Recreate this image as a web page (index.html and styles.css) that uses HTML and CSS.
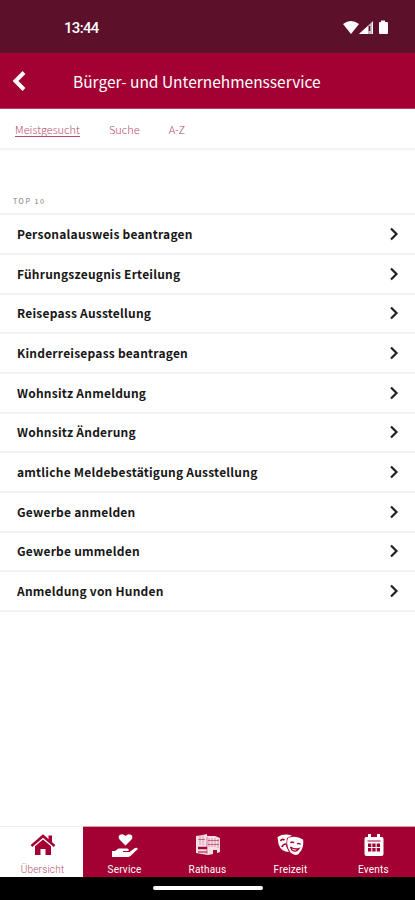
FILE: index.html
```html
<!DOCTYPE html>
<html lang="de">
<head>
<meta charset="utf-8">
<title>Bürger- und Unternehmensservice</title>
<link rel="stylesheet" href="styles.css">
</head>
<body>
<div class="status">
  <span class="clock">13:44</span>
  <svg class="signals" width="46" height="16" viewBox="0 0 46 16" fill="#fff">
    <path d="M0 4Q8 -2 16 4L8 14Z"/>
    <path d="M30 1V14H16Z" fill="#c9b5bf"/><path d="M25 6V14H16Z"/><path d="M26.500 6V11" stroke="#5c102a" stroke-width="1.500"/><path d="M29.500 2V14" stroke="#fff"/>
    <path d="M38 0.500h4v1.500h2q1 0 1 1v10q0 1-1 1h-7q-1 0-1-1V3q0-1 1-1h1z"/>
  </svg>
</div>
<header class="header">
  <svg class="back" width="14" height="20" viewBox="0 0 14 20"><path d="M12 1.500L3.500 10L12 18.500" fill="none" stroke="#fff" stroke-width="4"/></svg>
  <h1>Bürger- und Unternehmensservice</h1>
</header>
<nav class="tabs">
  <a class="tab active">Meistgesucht</a><a class="tab">Suche</a><a class="tab">A-Z</a>
</nav>
<main>
  <h2>TOP 10</h2>
  <ul class="list">
    <li><span>Personalausweis beantragen</span><svg class="chev" viewBox="0 0 10 14"><path d="M2 1.500L7.500 7L2 12.500"/></svg></li>
    <li><span>Führungszeugnis Erteilung</span><svg class="chev" viewBox="0 0 10 14"><path d="M2 1.500L7.500 7L2 12.500"/></svg></li>
    <li><span>Reisepass Ausstellung</span><svg class="chev" viewBox="0 0 10 14"><path d="M2 1.500L7.500 7L2 12.500"/></svg></li>
    <li><span>Kinderreisepass beantragen</span><svg class="chev" viewBox="0 0 10 14"><path d="M2 1.500L7.500 7L2 12.500"/></svg></li>
    <li><span>Wohnsitz Anmeldung</span><svg class="chev" viewBox="0 0 10 14"><path d="M2 1.500L7.500 7L2 12.500"/></svg></li>
    <li><span>Wohnsitz Änderung</span><svg class="chev" viewBox="0 0 10 14"><path d="M2 1.500L7.500 7L2 12.500"/></svg></li>
    <li><span>amtliche Meldebestätigung Ausstellung</span><svg class="chev" viewBox="0 0 10 14"><path d="M2 1.500L7.500 7L2 12.500"/></svg></li>
    <li><span>Gewerbe anmelden</span><svg class="chev" viewBox="0 0 10 14"><path d="M2 1.500L7.500 7L2 12.500"/></svg></li>
    <li><span>Gewerbe ummelden</span><svg class="chev" viewBox="0 0 10 14"><path d="M2 1.500L7.500 7L2 12.500"/></svg></li>
    <li><span>Anmeldung von Hunden</span><svg class="chev" viewBox="0 0 10 14"><path d="M2 1.500L7.500 7L2 12.500"/></svg></li>
  </ul>
</main>
<nav class="bottom">
  <a class="item active">
    <svg width="26" height="22" viewBox="0 0 26 22"><path d="M1.500 12L13 2L24.500 12" fill="none" stroke="#a30034" stroke-width="2.500"/><path d="M18.500 1.500h3.500v7l-3.500-3zM5 12.300L13 5.500L21 12.300V21H15.500V15h-5v6H5z" fill="#a30034"/></svg>
    <span>Übersicht</span>
  </a>
  <a class="item">
    <svg width="26" height="24" viewBox="0 0 26 24" fill="#fff"><path d="M13.500 11.500L7.500 5.500Q5.500 2.500 8 0.800Q11-.8 13.500 2Q16-.8 19 .8Q21.500 2.500 19.500 5.500Z"/><path d="M0 17H3L6.500 14.500H15.500Q17.500 15.200 16.500 17H11V18H17.500L23 14Q25.500 13 25.800 15L19 21.500Q17.500 23 15 23H0Z"/></svg>
    <span>Service</span>
  </a>
  <a class="item">
    <svg width="26" height="22" viewBox="0 0 26 22"><path d="M1 2L8 1L12 0V2L20 2L25 4V18L22 19V16H18V20L13 21L1 19Z" fill="#f7dfe7"/><g stroke="#a30034" fill="none"><path d="M12 3V20M3 5.500h7M13 6.500h11M13 10.500h11" stroke-width=".5"/><path d="M3 14h9" stroke-width="2.500"/><path d="M3 18h9" stroke-width="1"/><path d="M5 2v9M8 2v9M14 4v9M17 4v9M20 4v9M23 5v9" stroke-width=".35"/></g></svg>
    <span>Rathaus</span>
  </a>
  <a class="item">
    <svg width="27" height="22" viewBox="0 0 27 22"><path d="M.5 3Q7-1 15 1.500L10 4L9 12L12 18Q4 18 1.500 10Z" fill="#fff"/><path d="M3.500 7Q5 4.500 7.500 6M5 13Q6 10 9 10" stroke="#a30034" stroke-width="1.700" fill="none"/><path d="M11 4Q19 1 26 5.500Q27.500 14 21.500 20Q18 22.500 13.500 18.500Q8.500 12 11 4Z" fill="#fff"/><path d="M13.500 9Q15 7 17 9M20 10Q22 8.500 23.500 10.500M13.500 13Q17.500 16 22 14.500Q19 19 15 16Z" stroke="#a30034" stroke-width="1.300" fill="none"/></svg>
    <span>Freizeit</span>
  </a>
  <a class="item">
    <svg width="20" height="22" viewBox="0 0 20 22"><path d="M2 3H4V0H7V3H13V0H16V3H18Q19.500 3 19.500 5V20Q19.500 22 17.500 22H2.500Q.5 22 .5 20V5Q.5 3 2 3Z" fill="#fff"/><path d="M3.500 7H16.500" stroke="#a30034"/><path d="M4 9.500h3.300v3.500H4zM8.300 9.500h3.300v3.500h-3.300zM12.700 9.500h3.300v3.500h-3.300zM4 14h3.300v3.500H4zM8.300 14h3.300v3.500h-3.300zM12.700 14h3.300v3.500h-3.300z" fill="#a30034"/></svg>
    <span>Events</span>
  </a>
</nav>
<div class="gesture"><i></i></div>
</body>
</html>
```
FILE: styles.css
```css
* { box-sizing: border-box; }
body { margin: 0; width: 415px; height: 900px; overflow: hidden; display: flex; flex-direction: column; background: #fff; font-family: "Noto Sans CJK JP", "Noto Sans", sans-serif; }
.status { height: 53px; flex: none; background: #5c102a; display: flex; align-items: center; justify-content: space-between; padding: 2px 26px 0 64px; }
.clock { font: 500 15px Roboto, sans-serif; color: #fff; letter-spacing: -0.7px; }
.header { height: 56px; flex: none; background: #a30034; border-bottom: 1px solid #b94066; display: flex; align-items: center; padding-left: 12px; }
.back { flex: none; }
h1 { margin: 0 0 0 47px; font-size: 15.500px; font-weight: 400; color: #fff; line-height: 24px; white-space: nowrap; }
.tabs { height: 41px; flex: none; border-bottom: 2px solid #f3f3f3; display: flex; align-items: flex-start; padding: 13px 0 0 15px; gap: 29px; }
.tab { font-size: 11px; line-height: 14px; color: #b84c6b; font-weight: 300; height: 15px; }
.tab.active { border-bottom: 1px solid #b84c6b; }
main { flex: 1; }
h2 { margin: 45.400px 0 0 13px; font-size: 7px; line-height: 12px; height: 18px; font-weight: 400; color: #777; letter-spacing: 1.600px; }
.list { list-style: none; margin: 0; padding: 0; border-top: 2px solid #f2f2f2; }
.list li { height: 39.650px; border-bottom: 2px solid #f2f2f2; display: flex; align-items: center; justify-content: space-between; padding: 0 16px 0 17px; font-size: 12px; font-weight: 700; letter-spacing: 0.220px; color: #171717; line-height: 20px; }
.chev { width: 10px; height: 14px; fill: none; stroke: #222; stroke-width: 2.200; }
.bottom { height: 51px; flex: none; display: grid; grid-template-columns: repeat(5, 83px); background: #a30034; }
.item { display: flex; flex-direction: column; align-items: center; justify-content: space-between; padding: 7px 0 1px 0; color: #fff; border-top: 1px solid #d9a0b2; }
.item span { font: 400 10px/13px Roboto, sans-serif; letter-spacing: 0.200px; }
.item.active { background: #fff; color: #b84c6b; border-top-color: #eee; padding-left: 2px; }
.item.active span { font-weight: 300; letter-spacing: 0.200px; }
.gesture { height: 23px; flex: none; background: #000; display: flex; justify-content: center; padding-top: 9px; }
.gesture i { width: 110px; height: 4px; border-radius: 2px; background: #fff; }
```
